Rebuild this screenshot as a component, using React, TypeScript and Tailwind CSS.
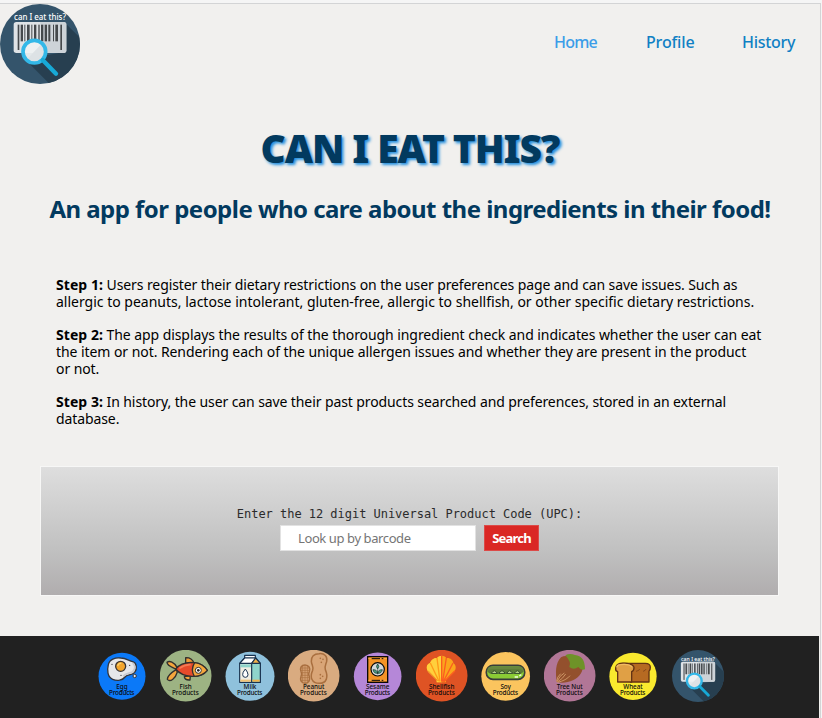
import type { ReactNode } from "react";

function Logo({ className }: { className: string }) {
  return (
    <svg viewBox="0 12 240 240" className={className} role="img" aria-label="can I eat this?">
      <defs>
        <clipPath id="logo-disc">
          <circle cx="120" cy="132" r="120" />
        </clipPath>
      </defs>
      <g clipPath="url(#logo-disc)">
        <rect x="0" y="12" width="240" height="240" fill="#34546b" />
        <path d="M196 155 L196 70 L245 118 V255 H152 L75 178Z" fill="#273f50" />
      </g>
      <rect x="41" y="66" width="158" height="93" rx="8" fill="#dfe3e6" />
      <path d="M120 66 H191 Q199 66 199 74 V151 Q199 159 191 159 H135Z" fill="#cdd3d8" />
      <g fill="#45494c">
        <rect x="53" y="74" width="5" height="76" />
        <rect x="62" y="74" width="7" height="50" />
        <rect x="73" y="74" width="3" height="50" />
        <rect x="81" y="74" width="8" height="50" />
        <rect x="94" y="74" width="3" height="50" />
        <rect x="102" y="74" width="7" height="50" />
        <rect x="115" y="74" width="4" height="50" />
        <rect x="123" y="74" width="7" height="50" />
        <rect x="134" y="74" width="7" height="50" />
        <rect x="145" y="74" width="6" height="50" />
        <rect x="159" y="74" width="3" height="50" />
        <rect x="166" y="74" width="8" height="50" />
        <rect x="181" y="74" width="5" height="76" />
      </g>
      <circle cx="103" cy="155" r="33" fill="#eef1f2" fillOpacity="0.95" />
      <path d="M81 178 L125 131 A33 33 0 0 1 103 188Z" fill="#dde2e5" />
      <circle cx="103" cy="155" r="34" fill="none" stroke="#33b8e8" strokeWidth="11" />
      <path d="M128 180 L168 221" stroke="#17a9d6" strokeWidth="13" strokeLinecap="round" />
      <text x="42" y="61" textLength="156" lengthAdjust="spacingAndGlyphs" fontSize="27" fontWeight="500" fill="#fff" fontFamily="Noto Sans, sans-serif">
        can I eat this?
      </text>
    </svg>
  );
}

type BadgeProps = {
  cx: number;
  cy: number;
  r: number;
  fill: string;
  name: string;
  spacing?: number;
  children: ReactNode;
};

// Each disc carries a drawing and a two-line caption.
function Badge({ cx, cy, r, fill, name, spacing = 0, children }: BadgeProps) {
  const left = cx > 200 ? 210 : 18;
  return (
    <svg viewBox={`${left} 60 156 156`} className="size-[52px]" role="img" aria-label={`${name} Products`}>
      <circle cx={cx} cy={cy} r={r} fill={fill} />
      {children}
      <text fontFamily="Noto Sans, sans-serif" fontSize="19" fontWeight="500" fill="#0b0b0b" textAnchor="middle">
        <tspan x={cx} y={177} letterSpacing={spacing}>{name}</tspan>
        <tspan x={cx - 1} y={195} letterSpacing={left > 200 ? 0 : -0.6}>Products</tspan>
      </text>
    </svg>
  );
}

function Allergens() {
  return (
    <>
      <Badge cx={96} cy={139} r={70.5} fill="#0b79f8" name="Egg">
        <path d="M55 104 C58 88 76 82 92 84 C108 84 116 92 128 95 C141 99 142 117 134 127 C125 137 111 133 105 141 C98 151 82 154 68 148 C52 141 51 120 55 104Z" fill="#e6e7ea" stroke="#33343a" strokeWidth="4" />
        <path d="M128 99 C137 106 136 118 128 125 C118 131 107 128 99 139" fill="none" stroke="#c7c9d0" strokeWidth="5" />
        <circle cx="92" cy="109" r="15" fill="#f3a52c" stroke="#3a3433" strokeWidth="4" />
        <path d="M83 108 Q85 99 94 100" fill="none" stroke="#fbd06a" strokeWidth="4" />
        <circle cx="134" cy="138" r="5" fill="#e6e7ea" stroke="#33343a" strokeWidth="3" />
        <g fill="#33343a"><circle cx="66" cy="103" r="2" /><circle cx="93" cy="136" r="2" /><circle cx="119" cy="106" r="2" /></g>
      </Badge>
      <Badge cx={287} cy={137} r={77.5} fill="#9db383" name="Fish">
        <g stroke="#33302d" strokeWidth="4" strokeLinejoin="round">
          <path d="M287 100 L287 83 Q305 82 312 99Z" fill="#ef9a35" />
          <path d="M258 117 C246 111 232 108 231 97 C238 91 253 96 261 112Z" fill="#f5a63c" />
          <path d="M258 119 C247 126 232 136 232 148 C241 158 257 144 262 126Z" fill="#f5a63c" />
          <path d="M283 140 Q284 151 300 150 L301 137Z" fill="#f5a63c" />
          <path d="M257 117 C270 101 290 96 312 98 C330 99 344 109 352 121 C343 133 329 140 305 139 C285 138 269 132 257 117Z" fill="#e64a2b" />
          <path d="M314 98 C332 100 344 109 352 121 C343 132 331 138 313 139 Q301 119 314 98Z" fill="#f5a63c" />
        </g>
        <path d="M268 115 Q285 103 302 104" fill="none" stroke="#f47a54" strokeWidth="5" />
        <circle cx="325" cy="121" r="9" fill="#fff" stroke="#33302d" strokeWidth="3" />
        <circle cx="325" cy="121" r="4" fill="#222" />
      </Badge>
      <Badge cx={96} cy={139} r={73.5} fill="#8fc1dc" name="Milk">
        <g stroke="#18324f" strokeWidth="3.5" strokeLinejoin="round">
          <path d="M65 100 L80 84 H113 L127 100 V157 H65Z" fill="#f0eee3" />
          <rect x="80" y="76" width="32" height="8" fill="#fff" />
          <path d="M101 100 H127 V157 H101Z" fill="#8fd4cb" />
          <path d="M65 100 L80 84 H113 L101 100Z" fill="#fff" />
          <path d="M113 84 L127 100 H101Z" fill="#f0b04a" />
        </g>
        <path d="M67 103 H99 V112 H67Z" fill="#8fd4cb" />
        <path d="M67 149 H99 V155 H67Z" fill="#f0c276" />
        <path d="M103 149 H125 V155 H103Z" fill="#f0b04a" />
        <path d="M82 117 Q73 128 74 134 A8 8 0 0 0 90 134 Q90 127 82 117Z" fill="#fff" stroke="#18324f" strokeWidth="3" />
      </Badge>
      <Badge cx={287} cy={137} r={77.5} fill="#d9ab80" name="Peanut">
        <g fill="#d9a577" stroke="#a96f3f" strokeWidth="4.5">
          <path d="M303 71 C320 69 329 80 326 94 C324 103 319 108 322 119 C331 140 327 160 304 160 C280 160 275 140 284 121 C288 111 281 106 280 94 C279 80 288 71 303 71Z" />
          <path d="M261 105 C273 105 278 116 274 125 C271 130 271 134 274 140 C278 151 271 160 261 160 C250 160 245 150 249 140 C252 134 252 130 249 124 C245 114 250 105 261 105Z" />
        </g>
        <path d="M254 108 V157 M261 106 V159 M268 108 V157 M248 114 H275 M248 121 H275 M250 128 H272 M250 136 H273 M247 143 H276 M248 151 H275" stroke="#a96f3f" strokeWidth="2" />
        <g fill="#a96f3f"><circle cx="307" cy="85" r="2.5" /><circle cx="315" cy="88" r="2.5" /><circle cx="310" cy="97" r="2.5" /><circle cx="307" cy="134" r="2.5" /><circle cx="314" cy="139" r="2.5" /><circle cx="307" cy="145" r="2.5" /></g>
      </Badge>
      <Badge cx={95} cy={139} r={71.5} fill="#b587d8" name="Sesame">
        <rect x="65" y="80" width="60" height="77" fill="#f59325" stroke="#080808" strokeWidth="4" />
        <path d="M67 85 H123 M67 151 H123" stroke="#ffab45" strokeWidth="3" />
        <path d="M77 86 H102 M107 86 H112 M77 151 H102 M107 151 H112" stroke="#080808" strokeWidth="3" />
        <circle cx="95" cy="118" r="20" fill="#d4d9dc" stroke="#080808" strokeWidth="3.5" />
        <path d="M95 133 V118 M95 130 Q83 131 81 119 Q93 118 95 130Q97 118 109 119 Q107 131 95 130 M95 117 Q88 109 95 102 Q102 109 95 117" fill="#4a9a80" stroke="#16342b" strokeWidth="2" />
      </Badge>
      <Badge cx={287} cy={137} r={77.5} fill="#df5324" name="Shellfish">
        <path d="M272 157 L272 151 L246 125 C239 112 243 102 252 99 C256 88 266 83 273 84 C281 75 294 75 301 84 C311 82 321 89 322 99 C331 106 331 115 325 126 L300 151 V157Z" fill="#fba51b" />
        <path d="M272 157 L272 151 L246 125 C239 112 243 102 252 99 C256 88 266 83 273 84 C278 78 285 77 287 78 V157Z" fill="#ffd03c" />
        <path d="M273 84 L282 155 M253 99 L279 154" stroke="#ff9a18" strokeWidth="4" />
        <path d="M301 84 L290 155 M321 99 L292 155 M327 122 L293 156 M287 78 V155" stroke="#fb5d20" strokeWidth="4" />
        <path d="M246 122 L275 152" stroke="#ef7c1c" strokeWidth="2.5" />
      </Badge>
      <Badge cx={95} cy={139} r={73} fill="#fbc45e" name="Soy">
        <rect x="37" y="106" width="115" height="42" rx="20" fill="#8acb35" stroke="#373d3a" strokeWidth="5" />
        <path d="M40 125 Q38 109 57 109 H132 Q150 109 149 125 Q139 119 128 119 H60 Q47 119 40 125Z" fill="#66863f" />
        <path d="M41 124 Q48 116 58 117 H132 Q142 117 148 124 Q145 132 134 132 H55 Q44 132 41 124Z" fill="#5c7d38" />
        <g fill="#cceb96" stroke="#30482a" strokeWidth="3">
          <path d="M52 130 Q61 115 70 130Z" /><path d="M75 130 Q84 115 93 130Z" /><path d="M98 130 Q107 115 116 130Z" /><path d="M121 130 Q130 115 139 130Z" />
        </g>
        <path d="M122 141 H132 M136 138 L142 134" stroke="#f4ffdf" strokeWidth="4" />
      </Badge>
      <Badge cx={287} cy={137} r={77.5} fill="#b17696" name="Tree Nut">
        <path d="M261 82 Q280 70 309 92 L326 116 C321 139 304 150 281 156 Q264 161 248 156 C245 127 243 102 261 82Z" fill="#93502d" />
        <path d="M274 76 Q287 68 303 75 Q333 78 333 118 Q320 122 313 111 Q299 122 286 111 Q293 96 274 76Z" fill="#6e9228" />
        <path d="M248 154 Q249 140 260 131 M249 155 Q257 136 271 129 M250 156 Q267 146 275 132 M251 157 Q277 151 288 137" fill="none" stroke="#d6a06f" strokeWidth="2.5" />
      </Badge>
      <Badge cx={93} cy={139} r={71} fill="#f9e92e" name="Wheat">
        <g stroke="#633214" strokeWidth="4" strokeLinejoin="round">
          <path d="M60 100 H130 Q145 100 145 112 Q145 121 141 124 V156 H85Z" fill="#b66a22" />
          <path d="M47 156 V125 C38 123 38 104 54 100 C76 97 95 103 96 113 Q96 122 89 125 V156Z" fill="#e0a045" />
        </g>
        <path d="M44 112 Q46 104 56 104 Q81 101 90 111" fill="none" stroke="#f1bb62" strokeWidth="4" />
        <path d="M102 124 Q112 122 113 117 M123 124 Q131 122 132 117" fill="none" stroke="#743b17" strokeWidth="2" />
      </Badge>
    </>
  );
}

function Step({ n, children }: { n: number; children: ReactNode }) {
  return (
    <p className="mb-[16.75px]">
      <b className="tracking-[0.05px]">Step {n}:</b> {children}
    </p>
  );
}

export default function App() {
  return (
    <div className="h-[718px] w-[822px] overflow-hidden bg-[#f5f5f5] pt-[3px] font-['Noto_Sans',sans-serif]">
      <div className="flex h-[715px] w-[821px] flex-col border-t border-r border-[#d3d4d5] bg-[#f1f0ee]">
        <header className="flex h-20 shrink-0 items-start justify-between">
          <Logo className="size-20" />
          <nav className="mr-[24px] mt-[26px] flex gap-[48px] text-base leading-6 text-[#1080c4]">
            <a className="w-[43px] whitespace-nowrap font-medium tracking-[-0.8px] text-[#3b9de8]">Home</a>
            <a className="w-[49px] whitespace-nowrap pl-px font-medium tracking-[-0.15px]">Profile</a>
            <a className="w-[54px] whitespace-nowrap font-medium tracking-[-0.3px]">History</a>
          </nav>
        </header>

        <main className="h-[552px] shrink-0">
          <h1 className="mt-[39px] whitespace-nowrap text-center text-[39px] leading-[50px] font-black tracking-[-1.15px] text-[#023a5f] [text-shadow:2px_2px_3px_#2590df]">
            CAN I EAT THIS?
          </h1>
          <h2 className="mt-[21px] whitespace-nowrap text-center text-2xl leading-[30px] font-bold tracking-[-0.53px] text-[#023a5f]">
            An app for people who care about the ingredients in their food!
          </h2>

          <section className="mt-[53px] ml-[56px] h-[189px] whitespace-nowrap text-[14px] leading-[16.75px] text-black">
            <Step n={1}>
              <span className="tracking-[-0.1px]">Users register their dietary restrictions on the user preferences page and can save issues. Such as</span>
              <br />
              <span>allergic to peanuts, lactose intolerant, gluten-free, allergic to shellfish, or other specific dietary restrictions.</span>
            </Step>
            <Step n={2}>
              <span className="tracking-[-0.075px]">The app displays the results of the thorough ingredient check and indicates whether the user can eat</span>
              <br />
              <span className="tracking-[-0.065px]">the item or not. Rendering each of the unique allergen issues and whether they are present in the product</span>
              <br />
              <span className="tracking-[-0.08px]">or not.</span>
            </Step>
            <Step n={3}>
              <span className="tracking-[-0.1px]">In history, the user can save their past products searched and preferences, stored in an external</span>
              <br />
              <span className="tracking-[-0.1px]">database.</span>
            </Step>
          </section>

          <form className="ml-[40px] flex h-[130px] w-[739px] flex-col items-center border border-[#f7f7f6] bg-linear-to-b from-[#dedede] via-[#bfbfbf] via-[68%] to-[#b0adae] pt-[39px]">
            <label className="font-['DejaVu_Sans_Mono',monospace] text-[12px] leading-[16px] tracking-[-0.03px] text-[#2b2b2b]">
              Enter the 12 digit Universal Product Code (UPC):
            </label>
            <div className="mt-[3px] flex gap-2">
              <input
                className="h-[26px] w-[196px] border border-[#e2e2e2] bg-white px-[17px] text-[13px] tracking-[-0.4px] placeholder:text-[#757575]"
                placeholder="Look up by barcode"
              />
              <button type="button" className="h-[26px] w-[55px] border border-[#dc4a48] bg-[#da2724] text-[13px] leading-none font-bold tracking-[-0.8px] text-white">
                Search
              </button>
            </div>
          </form>
        </main>

        <footer className="mr-px flex h-[82px] shrink-0 justify-center gap-3 bg-[#212121] pt-[14px]">
          <Allergens />
          <Logo className="size-[52px]" />
        </footer>
      </div>
    </div>
  );
}
